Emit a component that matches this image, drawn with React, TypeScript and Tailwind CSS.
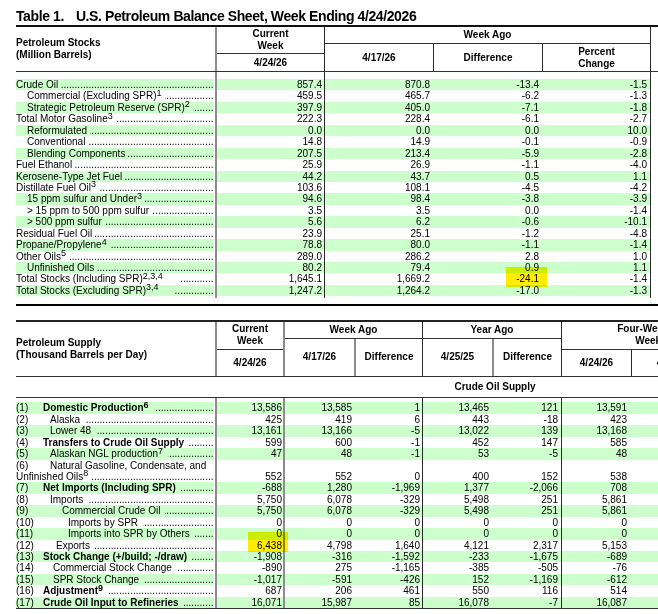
import React from "react"

const G = "bg-[#ccffcc]"
const DOTS = ".".repeat(90)
const GRAY = "border-[#8c8c8c]"
const DARK = "border-[#2a2a2a]"

interface StockRow {
    label: string
    indent?: boolean
    sup?: string
    wide?: boolean
    v: string[]
}

const stocks: StockRow[] = [
    { label: "Crude Oil", v: ["857.4", "870.8", "-13.4", "-1.5"] },
    { label: "Commercial (Excluding SPR)", indent: true, sup: "1", v: ["459.5", "465.7", "-6.2", "-1.3"] },
    { label: "Strategic Petroleum Reserve (SPR)", indent: true, sup: "2", v: ["397.9", "405.0", "-7.1", "-1.8"] },
    { label: "Total Motor Gasoline", sup: "3", v: ["222.3", "228.4", "-6.1", "-2.7"] },
    { label: "Reformulated", indent: true, v: ["0.0", "0.0", "0.0", "10.0"] },
    { label: "Conventional", indent: true, v: ["14.8", "14.9", "-0.1", "-0.9"] },
    { label: "Blending Components", indent: true, v: ["207.5", "213.4", "-5.9", "-2.8"] },
    { label: "Fuel Ethanol", v: ["25.9", "26.9", "-1.1", "-4.0"] },
    { label: "Kerosene-Type Jet Fuel", v: ["44.2", "43.7", "0.5", "1.1"] },
    { label: "Distillate Fuel Oil", sup: "3", v: ["103.6", "108.1", "-4.5", "-4.2"] },
    { label: "15 ppm sulfur and Under", indent: true, sup: "3", v: ["94.6", "98.4", "-3.8", "-3.9"] },
    { label: "> 15 ppm to 500 ppm sulfur", indent: true, v: ["3.5", "3.5", "0.0", "-1.4"] },
    { label: "> 500 ppm sulfur", indent: true, v: ["5.6", "6.2", "-0.6", "-10.1"] },
    { label: "Residual Fuel Oil", v: ["23.9", "25.1", "-1.2", "-4.8"] },
    { label: "Propane/Propylene", sup: "4", v: ["78.8", "80.0", "-1.1", "-1.4"] },
    { label: "Other Oils", sup: "5", v: ["289.0", "286.2", "2.8", "1.0"] },
    { label: "Unfinished Oils", indent: true, v: ["80.2", "79.4", "0.9", "1.1"] },
    { label: "Total Stocks (Including SPR)", sup: "2,3,4", wide: true, v: ["1,645.1", "1,669.2", "-24.1", "-1.4"] },
    { label: "Total Stocks (Excluding SPR)", sup: "3,4", wide: true, v: ["1,247.2", "1,264.2", "-17.0", "-1.3"] },
]

interface SupplyRow {
    n: string
    label: string
    pad: string
    bold?: boolean
    sup?: string
    second?: string
    v: string[]
}

const supply: SupplyRow[] = [
    { n: "(1)", label: "Domestic Production", pad: "w-[27px]", bold: true, sup: "6", v: ["13,586", "13,585", "1", "13,465", "121", "13,591"] },
    { n: "(2)", label: "Alaska", pad: "w-[34px]", v: ["425", "419", "6", "443", "-18", "423"] },
    { n: "(3)", label: "Lower 48", pad: "w-[34px]", v: ["13,161", "13,166", "-5", "13,022", "139", "13,168"] },
    { n: "(4)", label: "Transfers to Crude Oil Supply", pad: "w-[27px]", bold: true, v: ["599", "600", "-1", "452", "147", "585"] },
    { n: "(5)", label: "Alaskan NGL production", pad: "w-[34px]", sup: "7", v: ["47", "48", "-1", "53", "-5", "48"] },
    { n: "(6)", label: "Natural Gasoline, Condensate, and", pad: "w-[34px]", second: "Unfinished Oils", sup: "8", v: ["552", "552", "0", "400", "152", "538"] },
    { n: "(7)", label: "Net Imports (Including SPR)", pad: "w-[27px]", bold: true, v: ["-688", "1,280", "-1,969", "1,377", "-2,066", "708"] },
    { n: "(8)", label: "Imports", pad: "w-[34px]", v: ["5,750", "6,078", "-329", "5,498", "251", "5,861"] },
    { n: "(9)", label: "Commercial Crude Oil", pad: "w-[46px]", v: ["5,750", "6,078", "-329", "5,498", "251", "5,861"] },
    { n: "(10)", label: "Imports by SPR", pad: "w-[52px]", v: ["0", "0", "0", "0", "0", "0"] },
    { n: "(11)", label: "Imports into SPR by Others", pad: "w-[52px]", v: ["0", "0", "0", "0", "0", "0"] },
    { n: "(12)", label: "Exports", pad: "w-[40px]", v: ["6,438", "4,798", "1,640", "4,121", "2,317", "5,153"] },
    { n: "(13)", label: "Stock Change (+/build; -/draw)", pad: "w-[27px]", bold: true, v: ["-1,908", "-316", "-1,592", "-233", "-1,675", "-689"] },
    { n: "(14)", label: "Commercial Stock Change", pad: "w-[37px]", v: ["-890", "275", "-1,165", "-385", "-505", "-76"] },
    { n: "(15)", label: "SPR Stock Change", pad: "w-[37px]", v: ["-1,017", "-591", "-426", "152", "-1,169", "-612"] },
    { n: "(16)", label: "Adjustment", pad: "w-[27px]", bold: true, sup: "9", v: ["687", "206", "461", "550", "116", "514"] },
    { n: "(17)", label: "Crude Oil Input to Refineries", pad: "w-[27px]", bold: true, v: ["16,071", "15,987", "85", "16,078", "-7", "16,087"] },
]

function Leader({ wide = false }: { wide?: boolean }) {
    return (
        <span className={`flex min-w-0 flex-1 justify-end overflow-hidden ${wide ? "ml-[16px]" : "ml-[3px]"}`}>
            <span className="whitespace-nowrap">{DOTS}</span>
        </span>
    )
}

function Sup({ children }: { children: React.ReactNode }) {
    return <sup className="-top-[3.5px] text-[9px]">{children}</sup>
}

function StockLine({ row, green }: { row: StockRow; green: boolean }) {
    const bg = green ? G : ""
    return (
        <div className="flex h-[11.45px] leading-[11.45px]">
            <div className="w-[199px] pr-[1.5px]">
                <div className={`flex h-full ${bg} ${row.indent ? "pl-[11px]" : ""}`}>
                    <span className="whitespace-nowrap">
                        {row.label}
                        {row.sup && <Sup>{row.sup}</Sup>}
                    </span>
                    <Leader wide={row.wide} />
                </div>
            </div>
            <div className={`w-[109px] border-l-2 ${GRAY} pr-[2px] text-right ${bg}`}>{row.v[0]}</div>
            <div className={`flex w-[326px] border-l ${DARK} ${bg}`}>
                <div className="w-[108px] pr-[3px] text-right">{row.v[1]}</div>
                <div className="w-[109px] pr-[3px] text-right">{row.v[2]}</div>
                <div className="w-[108px] pr-[3px] text-right">{row.v[3]}</div>
            </div>
            <div className={`w-[120px] border-l ${DARK}`} />
        </div>
    )
}

function SupplyCells({ v, bg, lift = false }: { v: string[]; bg: string; lift?: boolean }) {
    const pt = lift ? "pt-[11.45px]" : ""
    return (
        <>
            <div className={`w-[68px] border-l-2 ${GRAY} pr-[1px] text-right ${bg} ${pt}`}>{v[0]}</div>
            <div className={`flex w-[139px] border-l-2 ${GRAY} ${bg} ${pt}`}>
                <div className="w-[69px] pr-[2px] text-right">{v[1]}</div>
                <div className="w-[68px] pr-[2px] text-right">{v[2]}</div>
            </div>
            <div className={`flex w-[139px] border-l ${DARK} ${bg} ${pt}`}>
                <div className="w-[69px] pr-[3px] text-right">{v[3]}</div>
                <div className="w-[69px] pr-[3px] text-right">{v[4]}</div>
            </div>
            <div className={`flex w-[210px] border-l ${DARK} ${bg} ${pt}`}>
                <div className="w-[69px] pr-[4px] text-right">{v[5]}</div>
            </div>
        </>
    )
}

function SupplyLine({ row, green }: { row: SupplyRow; green: boolean }) {
    const bg = green ? G : ""
    const labelText = (
        <span className={`whitespace-nowrap ${row.bold ? "font-bold" : ""}`}>
            {row.label}
            {row.sup && !row.second && <Sup>{row.sup}</Sup>}
        </span>
    )
    if (row.second) {
        return (
            <div className="flex h-[22.9px] leading-[11.45px]">
                <div className="w-[199px] pr-[1.5px]">
                    <div className={`flex h-[11.45px] ${bg}`}>
                        <span className={`shrink-0 ${row.pad}`}>{row.n}</span>
                        {labelText}
                    </div>
                    <div className={`flex h-[11.45px] ${bg}`}>
                        <span className="whitespace-nowrap">
                            {row.second}
                            {row.sup && <Sup>{row.sup}</Sup>}
                        </span>
                        <Leader />
                    </div>
                </div>
                <SupplyCells v={row.v} bg={bg} lift />
            </div>
        )
    }
    return (
        <div className="flex h-[11.45px] leading-[11.45px]">
            <div className="w-[199px] pr-[1.5px]">
                <div className={`flex h-full ${bg}`}>
                    <span className={`shrink-0 ${row.pad}`}>{row.n}</span>
                    {labelText}
                    <span className="w-[2px] shrink-0" />
                    <Leader />
                </div>
            </div>
            <SupplyCells v={row.v} bg={bg} />
        </div>
    )
}

function SupplyGapRow({ h }: { h: string }) {
    return (
        <div className={`flex ${h}`}>
            <div className="w-[199px]" />
            <div className={`w-[68px] border-l-2 ${GRAY}`} />
            <div className={`w-[139px] border-l-2 ${GRAY}`} />
            <div className={`w-[139px] border-l ${DARK}`} />
            <div className={`w-[210px] border-l ${DARK}`} />
        </div>
    )
}

export default function App() {
    return (
        <div className="relative h-[614px] w-[658px] overflow-hidden bg-white font-['Liberation_Sans',Arial,sans-serif] text-[10px] text-black">
            <div className="w-max pl-4">
                <div className="flex h-[25px] whitespace-nowrap pt-[8px] text-[14px] font-bold leading-[17px] tracking-[-0.4px]">
                    <span>Table 1.</span>
                    <span className="ml-[12px]">U.S. Petroleum Balance Sheet, Week Ending 4/24/2026</span>
                </div>
                <div className="h-[2px] w-[760px] bg-[#111]" />

                {/* stocks header */}
                <div className="flex h-[45px] border-b border-[#333] font-bold leading-[12px]">
                    <div className="flex w-[199px] flex-col justify-center">
                        <span>Petroleum Stocks</span>
                        <span>(Million Barrels)</span>
                    </div>
                    <div className={`flex w-[109px] flex-col border-l-2 ${GRAY}`}>
                        <div className="flex h-[27px] flex-col items-center justify-center border-b border-[#333]">
                            <span>Current</span>
                            <span>Week</span>
                        </div>
                        <div className="flex flex-1 items-center justify-center">4/24/26</div>
                    </div>
                    <div className={`flex w-[326px] flex-col border-l ${DARK}`}>
                        <div className="flex h-[17px] items-center justify-center border-b border-[#333]">Week Ago</div>
                        <div className="flex flex-1">
                            <div className="flex w-[108px] items-center justify-center">4/17/26</div>
                            <div className={`flex w-[109px] items-center justify-center border-l ${DARK}`}>Difference</div>
                            <div className={`flex w-[108px] flex-col items-center justify-center border-l ${DARK}`}>
                                <span>Percent</span>
                                <span>Change</span>
                            </div>
                        </div>
                    </div>
                    <div className={`w-[120px] border-l ${DARK}`} />
                </div>
                <div className="flex h-[7px]">
                    <div className="w-[199px]" />
                    <div className={`w-[109px] border-l-2 ${GRAY}`} />
                    <div className={`w-[326px] border-l ${DARK}`} />
                    <div className={`w-[120px] border-l ${DARK}`} />
                </div>

                {stocks.map((row, i) => (
                    <StockLine key={row.label} row={row} green={i % 2 === 0} />
                ))}
                <div className="flex h-[1.5px]">
                    <div className="w-[199px]" />
                    <div className={`w-[109px] border-l-2 ${GRAY}`} />
                    <div className={`w-[326px] border-l ${DARK}`} />
                    <div className={`w-[120px] border-l ${DARK}`} />
                </div>

                <div className="mt-[6px] h-[2px] w-[760px] bg-black" />

                {/* supply header */}
                <div className="mt-[14px] flex h-[57px] border-y-2 border-t-[#222] border-b-[#333] font-bold leading-[12px] [border-bottom-width:1px]">
                    <div className="flex w-[199px] flex-col justify-center">
                        <span>Petroleum Supply</span>
                        <span>(Thousand Barrels per Day)</span>
                    </div>
                    <div className={`flex w-[68px] flex-col border-l-2 ${GRAY}`}>
                        <div className="flex h-[28px] flex-col items-center justify-center border-b border-[#333]">
                            <span>Current</span>
                            <span>Week</span>
                        </div>
                        <div className="flex flex-1 items-center justify-center">4/24/26</div>
                    </div>
                    <div className={`flex w-[139px] flex-col border-l-2 ${GRAY}`}>
                        <div className="flex h-[17px] items-center justify-center border-b border-[#333]">Week Ago</div>
                        <div className="flex flex-1">
                            <div className="flex w-[69px] items-center justify-center">4/17/26</div>
                            <div className={`flex w-[68px] items-center justify-center border-l-2 ${GRAY}`}>Difference</div>
                        </div>
                    </div>
                    <div className={`flex w-[139px] flex-col border-l ${DARK}`}>
                        <div className="flex h-[17px] items-center justify-center border-b border-[#333]">Year Ago</div>
                        <div className="flex flex-1">
                            <div className="flex w-[69px] items-center justify-center">4/25/25</div>
                            <div className={`flex w-[69px] items-center justify-center border-l-2 ${GRAY}`}>Difference</div>
                        </div>
                    </div>
                    <div className={`flex w-[210px] flex-col border-l ${DARK}`}>
                        <div className="flex h-[28px] flex-col items-center justify-center border-b border-[#333]">
                            <span>Four-Week Averages</span>
                            <span>Week Ending</span>
                        </div>
                        <div className="flex flex-1">
                            <div className="flex w-[69px] items-center justify-center">4/24/26</div>
                            <div className={`flex w-[84px] items-center justify-center border-l ${DARK}`}>4/25/25</div>
                            <div className={`flex w-[56px] items-center justify-center border-l ${DARK}`}>Percent</div>
                        </div>
                    </div>
                </div>

                <div className="flex h-[21px] items-center border-b border-[#333] font-bold">
                    <div className="w-[199px]" />
                    <div className="w-[560px] text-center">Crude Oil Supply</div>
                </div>
                <SupplyGapRow h="h-[4.5px]" />

                <div className="w-[760px] border-b border-[#333]">
                    {supply.map((row, i) => (
                        <SupplyLine key={row.n} row={row} green={i % 2 === 0} />
                    ))}
                </div>
            </div>

            {/* highlighter marks */}
            <div className="absolute left-[506px] top-[267px] h-[20px] w-[41px] bg-[#ffec00] mix-blend-multiply blur-[0.6px]" />
            <div className="absolute left-[248px] top-[532px] h-[20px] w-[40px] bg-[#ffec00] mix-blend-multiply blur-[0.6px]" />
        </div>
    )
}
